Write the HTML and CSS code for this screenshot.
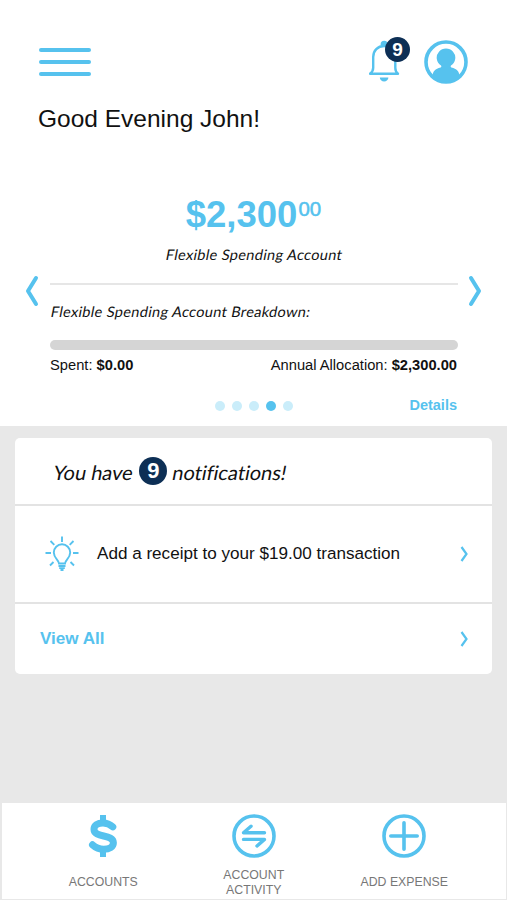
FILE: index.html
```html
<!DOCTYPE html>
<html lang="en">
<head>
    <meta charset="UTF-8">
    <meta name="viewport" content="width=device-width, initial-scale=1.0">
    <title>Accounts</title>
    <link rel="stylesheet" href="styles.css">
</head>
<body>

    <header class="top-bar">
        <button class="icon-btn menu-btn" aria-label="Menu">
            <span></span>
            <span></span>
            <span></span>
        </button>
        <div class="top-actions">
            <button class="icon-btn bell-btn" aria-label="Notifications">
                <svg width="32" height="44" viewBox="0 0 32 44" fill="none" stroke="#56c2ee" stroke-width="2.4">
                    <path d="M12.800 5V4.400a2.400 2.400 0 0 1 4.800 0V5" fill="#56c2ee"/>
                    <path d="M1 33.800h28c-2-1.500-2.700-3.300-2.700-6V17c0-6.600-4.600-11-11.100-11S4.200 10.400 4.200 17v10.800c0 2.700-1.200 4.500-3.200 6z" stroke-linejoin="round"/>
                    <path d="M10.800 37.500h8.600a4.300 4 0 0 1-8.600 0z" fill="#56c2ee" stroke="none"/>
                </svg>
                <span class="badge">9</span>
            </button>
            <button class="icon-btn" aria-label="Profile">
                <svg class="avatar" width="44" height="44" viewBox="0 0 44 44">
                    <circle cx="22" cy="22" r="20" fill="none" stroke="#56c2ee" stroke-width="3.6"/>
                    <path d="M8.600 36c.2-5 2.600-7.400 8-8.600.8-.2 1-1.200.4-1.800a9.300 9.300 0 1 1 10 0c-.6.600-.4 1.600.4 1.800 5.400 1.200 7.800 3.600 8 8.600A19.500 19.500 0 0 1 8.600 36z" fill="#56c2ee"/>
                </svg>
            </button>
        </div>
    </header>

    <h1 class="greeting">Good Evening John!</h1>

    <!-- Account carousel -->
    <section class="carousel">
        <button class="icon-btn arrow-btn" aria-label="Previous">
            <svg width="14" height="32" viewBox="0 0 14 32"><path d="M11 3L3 16l8 13"/></svg>
        </button>
        <div class="account">
            <p class="amount">$2,300<span class="cents">00</span></p>
            <p class="account-name"><span class="slanted">Flexible Spending Account</span></p>
            <p class="breakdown"><span class="slanted">Flexible Spending Account Breakdown:</span></p>
            <div class="progress"></div>
            <div class="totals">
                <span>Spent: <b>$0.00</b></span>
                <span class="allocation">Annual Allocation: <b>$2,300.00</b></span>
            </div>
            <div class="account-footer">
                <div class="dots">
                    <span class="dot"></span>
                    <span class="dot"></span>
                    <span class="dot"></span>
                    <span class="dot active"></span>
                    <span class="dot"></span>
                </div>
                <a class="details">Details</a>
            </div>
        </div>
        <button class="icon-btn arrow-btn" aria-label="Next">
            <svg width="14" height="32" viewBox="0 0 14 32"><path d="M3 3l8 13-8 13"/></svg>
        </button>
    </section>

    <main class="content">
        <div class="card">
            <div class="card-title">
                <span class="slanted">You have</span>
                <span class="count">9</span>
                <span class="slanted">notifications!</span>
            </div>
            <a class="card-row notification">
                <svg class="bulb" width="34" height="36" viewBox="0 0 34 36" fill="none" stroke="#56c2ee" stroke-width="1.900">
                    <path d="M17 .5v5.500M5.500 5l3.800 3.800M28.500 5l-3.800 3.800M.5 17h5.500M28 17h5.500M5 29.500l3.500-3.500M29 29.500l-3.500-3.500"/>
                    <path d="M14 27.500c0-3.200-5.200-5.200-5.200-11a8.200 8.200 0 0 1 16.400 0c0 5.800-5.200 7.800-5.200 11z"/>
                    <path d="M13.500 30h7M14.200 32.100h5.600M15.500 34h3"/>
                </svg>
                <span class="row-text">Add a receipt to your $19.00 transaction</span>
                <svg class="chevron" width="8" height="16" viewBox="0 0 8 16"><path d="M1.500 1L6.500 8l-5 7"/></svg>
            </a>
            <a class="card-row view-all">
                <span class="row-text">View All</span>
                <svg class="chevron" width="8" height="16" viewBox="0 0 8 16"><path d="M1.500 1L6.500 8l-5 7"/></svg>
            </a>
        </div>
    </main>

    <nav class="tab-bar">
        <a class="tab">
            <svg width="44" height="44" viewBox="0 0 44 44" fill="none" stroke="#56c2ee">
                <path d="M22 1v7M22 36v7" stroke-width="6"/>
                <path d="M31.800 12.800C29 10.300 26 9 22 9c-5.500 0-9 2.200-9 6.200 0 9.300 19.400 4.300 19.400 13.600 0 4-4 6.400-9.700 6.400-4.500 0-8-1.500-11.200-4.400" stroke-width="7" stroke-linecap="round"/>
            </svg>
            <span class="tab-label">ACCOUNTS</span>
        </a>
        <a class="tab tab-activity">
            <svg width="44" height="44" viewBox="0 0 44 44" fill="none" stroke="#56c2ee" stroke-width="3.600" stroke-linecap="round" stroke-linejoin="round">
                <circle cx="22" cy="22" r="20"/>
                <path d="M32.500 18.800h-21l7.500-6.600M11.500 25.400h21L25 32" stroke-width="3.400"/>
            </svg>
            <span class="tab-label">ACCOUNT<br>ACTIVITY</span>
        </a>
        <a class="tab">
            <svg width="44" height="44" viewBox="0 0 44 44" fill="none" stroke="#56c2ee" stroke-width="3.600" stroke-linecap="round">
                <circle cx="22" cy="22" r="20"/>
                <path d="M22 8.800v26.400M8.800 22h26.400"/>
            </svg>
            <span class="tab-label">ADD EXPENSE</span>
        </a>
    </nav>

</body>
</html>
```
FILE: styles.css
```css
* {
    box-sizing: border-box;
}

body {
    margin: 0;
    height: 900px;
    display: flex;
    flex-direction: column;
    background-color: #fff;
    color: #111;
    font-family: "Liberation Sans", Arial, Helvetica, sans-serif;
    overflow: hidden;
}

p, h1 {
    margin: 0;
    font-weight: normal;
}

.icon-btn {
    padding: 0;
    border: 0;
    background: none;
    cursor: pointer;
}

svg {
    display: block;
    flex: none;
}

/* Lato without its cursive italic shapes */
.slanted {
    display: inline-block;
    font-family: Lato, sans-serif;
    font-variant-ligatures: none;
    transform: skewX(-11deg);
}

/* Top bar */
.top-bar {
    display: flex;
    justify-content: space-between;
    align-items: center;
    height: 84px;
    padding: 40px 39px 0;
}

.menu-btn {
    display: flex;
    flex-direction: column;
    gap: 8px;
    width: 52px;
}

.menu-btn span {
    height: 4px;
    border-radius: 2px;
    background-color: #56c2ee;
}

.top-actions {
    display: flex;
    gap: 23px;
}

.bell-btn {
    position: relative;
}

.badge {
    position: absolute;
    top: -3px;
    left: 16px;
    width: 25px;
    height: 25px;
    border-radius: 50%;
    background-color: #0d2f55;
    color: #fff;
    font: bold 19px/25px "Liberation Sans", Arial, sans-serif;
    text-align: center;
}

.greeting {
    height: 112px;
    padding: 20px 38px 0;
    font-size: 24.5px;
    line-height: 30px;
}

/* Account carousel */
.carousel {
    display: flex;
    height: 230px;
    padding: 0 25px;
}

.arrow-btn {
    width: 14px;
    height: 32px;
    margin-top: 79px;
}

.arrow-btn path {
    fill: none;
    stroke: #56c2ee;
    stroke-width: 4;
    stroke-linecap: round;
    stroke-linejoin: round;
}

.account {
    flex: 1;
    margin: 0 10px 0 11px;
}

.amount {
    display: flex;
    justify-content: center;
    height: 40px;
    padding-right: 1px;
    color: #56c2ee;
    font-size: 36.5px;
    font-weight: bold;
    line-height: 38px;
}

.cents {
    margin-left: 1px;
    font-size: 20.5px;
    font-weight: normal;
    line-height: 25px;
    -webkit-text-stroke: 0.5px #56c2ee;
}

.account-name,
.breakdown {
    font-size: 14.5px;
    line-height: 20px;
    letter-spacing: 0.36px;
}

.account-name {
    height: 49px;
    padding-top: 9px;
    border-bottom: 2px solid #e6e6e6;
    text-align: center;
}

.breakdown {
    height: 38px;
    padding: 17px 0 0 1px;
}

.progress {
    height: 10px;
    margin-top: 17px;
    border-radius: 5px;
    background-color: #d5d5d5;
}

.totals {
    display: flex;
    justify-content: space-between;
    padding: 5px 1px 0 0;
    font-size: 14.7px;
    line-height: 20px;
}

.account-footer {
    display: grid;
    grid-template-columns: 1fr auto 1fr;
    align-items: center;
    margin-top: 20px;
}

.dots {
    grid-column: 2;
    display: flex;
    gap: 7px;
    padding-top: 2px;
}

.dot {
    width: 10px;
    height: 10px;
    border-radius: 50%;
    background-color: #caedfa;
}

.dot.active {
    background-color: #56c2ee;
}

.details {
    justify-self: end;
    padding-right: 1px;
    color: #56c2ee;
    font-size: 14.5px;
    font-weight: bold;
    line-height: 20px;
}

/* Notifications */
.content {
    flex: 1;
    padding: 12px 15px 0;
    background-color: #e8e8e8;
}

.card {
    height: 236px;
    border-radius: 5px;
    background-color: #fff;
}

.card-title {
    display: flex;
    align-items: center;
    height: 66px;
    padding-left: 39px;
    font-size: 20px;
}

.card-title .slanted {
    padding-top: 2px;
}

.count {
    width: 28px;
    height: 28px;
    margin: 0 6px 0 6px;
    border-radius: 50%;
    background-color: #0d2f55;
    color: #fff;
    font: bold 22px/28px "Liberation Sans", Arial, sans-serif;
    text-align: center;
}

.card-row {
    display: flex;
    align-items: center;
    border-top: 2px solid #e3e3e3;
}

.row-text {
    flex: 1;
}

.notification {
    height: 98px;
    padding: 0 24px 0 30px;
    font-size: 17.1px;
}

.bulb {
    margin-right: 18px;
}

.view-all {
    height: 72px;
    padding: 0 24px 0 25px;
    color: #56c2ee;
    font-size: 17.1px;
    font-weight: bold;
}

.chevron path {
    fill: none;
    stroke: #56c2ee;
    stroke-width: 2.2;
}

/* Bottom tab bar */
.tab-bar {
    display: flex;
    height: 97px;
    padding-left: 26px;
    border: 1px solid #e8e8e8;
    border-width: 0 1px 1px 2px;
}

.tab {
    width: 150.5px;
    display: flex;
    flex-direction: column;
    align-items: center;
    padding-top: 11px;
    color: #777;
    font-size: 12.3px;
    line-height: 14.5px;
    text-align: center;
}

.tab-label {
    margin-top: 17px;
}

.tab-activity .tab-label {
    margin-top: 10px;
}
```
